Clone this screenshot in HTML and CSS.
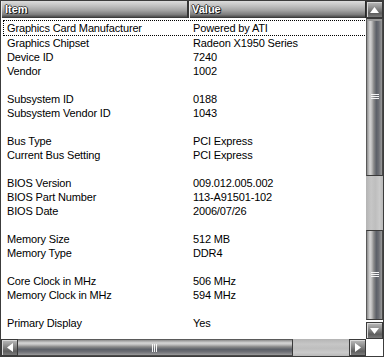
FILE: index.html
```html
<!DOCTYPE html>
<html>
<head>
	<title>Graphics Card</title>
	<link rel="stylesheet" href="styles.css">
</head>
<body>
<div class="window">
	<div class="view">
		<div class="header">
			<div class="col item">Item</div>
			<div class="col value">Value</div>
		</div>
		<div class="rows">
			<div class="row focus"><span>Graphics Card Manufacturer</span><span>Powered by ATI</span></div>
			<div class="row"><span>Graphics Chipset</span><span>Radeon X1950 Series</span></div>
			<div class="row"><span>Device ID</span><span>7240</span></div>
			<div class="row"><span>Vendor</span><span>1002</span></div>
			<div class="row"></div>
			<div class="row"><span>Subsystem ID</span><span>0188</span></div>
			<div class="row"><span>Subsystem Vendor ID</span><span>1043</span></div>
			<div class="row"></div>
			<div class="row"><span>Bus Type</span><span>PCI Express</span></div>
			<div class="row"><span>Current Bus Setting</span><span>PCI Express</span></div>
			<div class="row"></div>
			<div class="row"><span>BIOS Version</span><span>009.012.005.002</span></div>
			<div class="row"><span>BIOS Part Number</span><span>113-A91501-102</span></div>
			<div class="row"><span>BIOS Date</span><span>2006/07/26</span></div>
			<div class="row"></div>
			<div class="row"><span>Memory Size</span><span>512 MB</span></div>
			<div class="row"><span>Memory Type</span><span>DDR4</span></div>
			<div class="row"></div>
			<div class="row"><span>Core Clock in MHz</span><span>506 MHz</span></div>
			<div class="row"><span>Memory Clock in MHz</span><span>594 MHz</span></div>
			<div class="row"></div>
			<div class="row"><span>Primary Display</span><span>Yes</span></div>
		</div>
	</div>

	<div class="vscroll">
		<div class="btn"><svg width="9" height="6" viewBox="0 0 9 6"><path d="M0 6 L4.5 0 L9 6 Z" fill="#fff"/></svg></div>
		<div class="vbar top"><div class="grip v"></div></div>
		<div class="vtrack"></div>
		<div class="vbar bottom"><div class="grip v"></div></div>
		<div class="btn"><svg width="9" height="6" viewBox="0 0 9 6"><path d="M0 0 L4.5 6 L9 0 Z" fill="#fff"/></svg></div>
	</div>

	<div class="hscroll">
		<div class="btn"><svg width="6" height="9" viewBox="0 0 6 9"><path d="M6 0 L0 4.5 L6 9 Z" fill="#fff"/></svg></div>
		<div class="hbar"><div class="grip h"></div></div>
		<div class="htrack"></div>
		<div class="btn"><svg width="6" height="9" viewBox="0 0 6 9"><path d="M0 0 L6 4.5 L0 9 Z" fill="#fff"/></svg></div>
	</div>

	<div class="corner"></div>
</div>
</body>
</html>
```

FILE: styles.css
```css
body {
	margin: 0;
	background: #fff;
}

.window {
	width: 384px;
	height: 357px;
	box-sizing: border-box;
	border: 1px solid #3c3c3c;
	display: grid;
	grid-template-columns: 1fr 17px;
	grid-template-rows: 1fr 17px;
	font-family: "Liberation Sans", Arial, sans-serif;
	font-size: 11px;
	color: #000;
	overflow: hidden;
}

.view {
	overflow: hidden;
	background: #fff;
}

.header {
	display: flex;
	height: 17px;
}

.col {
	height: 17px;
	box-sizing: border-box;
	background: linear-gradient(#dcdcdc, #c4c4c4 25%, #a4a4a4 55%, #7c7c7c 80%, #4c4c4c 94%, #2c2c2c);
	color: #fff;
	font-weight: bold;
	font-size: 11px;
	line-height: 16px;
	padding-left: 4px;
	text-shadow: 1px 1px 0 #202020, -1px 0 0 #404040, 0 -1px 0 #505050, 1px 0 0 #303030;
	border-right: 1px solid #2a2a2a;
	box-shadow: inset 1px 0 0 #eaeaea;
}

.item {
	width: 188px;
	border-right: 2px solid #353535;
}

.value {
	flex: 1;
	padding-left: 3px;
}

.rows {
	padding-top: 2px;
}

.row {
	display: flex;
	height: 14px;
	line-height: 14px;
	margin-left: 3px;
	width: 362px;
	white-space: nowrap;
	letter-spacing: -0.15px;
}

.row span:first-child {
	width: 186px;
	padding-left: 3px;
}

.focus {
	height: 14px;
	border: 1px dotted #000;
	margin-left: 2px;
}

.focus span:first-child {
	width: 186px;
}

.vscroll {
	display: flex;
	flex-direction: column;
	background: #fff;
}

.btn {
	width: 17px;
	height: 17px;
	box-sizing: border-box;
	border: 1px solid #3a3a3a;
	background: linear-gradient(#bcbcbc, #8c8c8c 40%, #5e5e5e 75%, #7a7a7a);
	box-shadow: inset 1px 1px 0 #d8d8d8;
	display: flex;
	align-items: center;
	justify-content: center;
	flex: none;
}

.vbar {
	box-sizing: border-box;
	border-left: 1px solid #5a5a5a;
	border-right: 1px solid #4a4a4a;
	background: linear-gradient(90deg, #8c8c8c, #d6d6d6 20%, #bcbcbc 32%, #8a8a8a 45%, #5c6068 62%, #6c6e74 78%, #9a9a9a);
	display: flex;
	align-items: center;
	justify-content: center;
}

.vbar.top {
	height: 158px;
	border-top: 1px solid #3a3a3a;
	border-bottom: 1px solid #3a3a3a;
	box-shadow: inset 0 2px 0 #9a9a9a;
}

.vbar.bottom {
	height: 90px;
	border-top: 1px solid #3a3a3a;
	border-bottom: 1px solid #3a3a3a;
	margin-bottom: 2px;
}

.vtrack {
	flex: 1;
	background: linear-gradient(90deg, #b4b4b4, #c6c6c6 30%, #bebebe 55%, #cacaca 80%, #b8b8b8);
}

.grip {
	background: repeating-linear-gradient(#f4f4f4 0 1px, transparent 1px 2px);
}

.grip.v {
	width: 8px;
	height: 6px;
}

.hscroll {
	display: flex;
	background: #fff;
}

.hbar {
	width: 275px;
	box-sizing: border-box;
	border-top: 1px solid #5a5a5a;
	border-bottom: 1px solid #4a4a4a;
	border-right: 1px solid #3a3a3a;
	background: linear-gradient(#8c8c8c, #d6d6d6 20%, #bcbcbc 32%, #8a8a8a 45%, #5c6068 62%, #6c6e74 78%, #9a9a9a);
	display: flex;
	align-items: center;
	justify-content: center;
}

.grip.h {
	width: 6px;
	height: 8px;
	background: repeating-linear-gradient(90deg, #f4f4f4 0 1px, transparent 1px 2px);
}

.htrack {
	flex: 1;
	background: linear-gradient(#b4b4b4, #c6c6c6 30%, #bebebe 55%, #cacaca 80%, #b8b8b8);
}

.corner {
	background: #fff;
}
```
